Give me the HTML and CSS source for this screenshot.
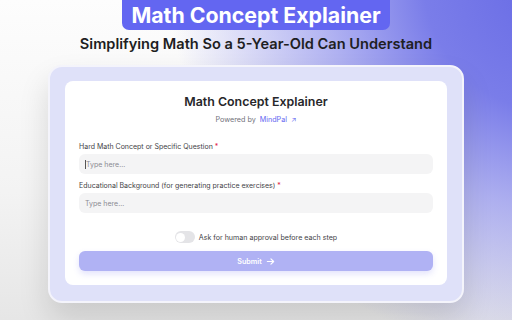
FILE: index.html
```html
<!DOCTYPE html>
<html>
<head>
<meta charset="utf-8">
<link rel="stylesheet" href="styles.css">
</head>
<body>
<div class="page">
  <div class="badge">Math Concept Explainer</div>
  <div class="subtitle">Simplifying Math So a 5-Year-Old Can Understand</div>
  <div class="frame">
    <div class="card">
      <div class="card-title">Math Concept Explainer</div>
      <div class="powered">Powered by <span class="brand">MindPal</span> <span class="brand arrow">↗</span></div>
      <div class="field field-first">
        <div class="label">Hard Math Concept or Specific Question <span class="req">*</span></div>
        <div class="input"><span class="caret"></span>Type here...</div>
      </div>
      <div class="field field-next">
        <div class="label">Educational Background (for generating practice exercises) <span class="req">*</span></div>
        <div class="input">Type here...</div>
      </div>
      <div class="toggle-row">
        <span class="toggle"><span class="knob"></span></span>
        <span class="toggle-text">Ask for human approval before each step</span>
      </div>
      <div class="submit">Submit
        <svg width="9" height="9" viewBox="0 0 10 10" fill="none" stroke="#fff" stroke-width="1.3" stroke-linecap="round" stroke-linejoin="round"><path d="M1.5 5h7M5.5 2l3 3-3 3"/></svg>
      </div>
    </div>
  </div>
</div>
</body>
</html>
```
FILE: styles.css
```css
html, body {
  margin: 0;
  padding: 0;
}
body {
  width: 512px;
  height: 320px;
  overflow: hidden;
  font-family: Inter, "Noto Sans", sans-serif;
  background:
    radial-gradient(ellipse 390px 380px at 560px -20px, #6669e5 0%, #7a7de9 35%, rgba(150,152,238,0.75) 60%, rgba(230,230,250,0) 100%),
    linear-gradient(180deg, #fdfdfd 0%, #f3f3f3 60%, #e6e6e6 100%);
}
.page {
  display: flex;
  flex-direction: column;
  align-items: center;
}
.badge {
  margin-top: -6px;
  height: 36px;
  padding: 5px 9px 0;
  box-sizing: border-box;
  display: flex;
  align-items: center;
  background: #6366f1;
  color: #fff;
  font-weight: 700;
  font-size: 21.3px;
  border-radius: 7px;
}
.subtitle {
  margin-top: 5px;
  font-size: 14.6px;
  line-height: 18px;
  font-weight: 600;
  color: #1e1e22;
}
.frame {
  margin-top: 12px;
  width: 416px;
  box-sizing: border-box;
  padding: 14px 15px 16px;
  background: #dfe1f9;
  border: 2px solid #f4f4fb;
  border-radius: 14px;
  box-shadow: 0 16px 30px rgba(0,0,0,0.13);
}
.card {
  background: #fff;
  border-radius: 8px;
  padding: 13px 14px 14px;
  display: flex;
  flex-direction: column;
}
.card-title {
  text-align: center;
  font-size: 12.4px;
  line-height: 16px;
  font-weight: 600;
  color: #27272a;
}
.powered {
  text-align: center;
  margin-top: 5px;
  font-size: 7.2px;
  line-height: 10px;
  color: #71717a;
}
.brand {
  color: #6366f1;
  margin-left: 2px;
}
.arrow {
  font-size: 7px;
}
.field {
  display: flex;
  flex-direction: column;
}
.field-first {
  margin-top: 17px;
}
.field-next {
  margin-top: 7px;
}
.label {
  font-size: 7px;
  line-height: 9px;
  color: #3f3f46;
  margin-bottom: 3px;
}
.req {
  color: #e11d48;
}
.input {
  height: 20px;
  border-radius: 6px;
  background: #f4f4f5;
  font-size: 7px;
  color: #8a8a92;
  display: flex;
  align-items: center;
  padding-left: 6px;
}
.caret {
  width: 1px;
  height: 9px;
  background: #555;
}
.toggle-row {
  margin-top: 18px;
  display: flex;
  align-items: center;
  justify-content: center;
  gap: 4px;
}
.toggle {
  width: 20px;
  height: 12px;
  border-radius: 6px;
  background: #e4e4e7;
  position: relative;
}
.knob {
  position: absolute;
  left: 1.5px;
  top: 1.5px;
  width: 9px;
  height: 9px;
  border-radius: 50%;
  background: #fff;
}
.toggle-text {
  font-size: 7.1px;
  color: #3f3f46;
}
.submit {
  margin-top: 8px;
  height: 20px;
  border-radius: 6px;
  background: #b0b2f4;
  color: #fff;
  font-size: 7.2px;
  font-weight: 600;
  display: flex;
  align-items: center;
  justify-content: center;
  gap: 4px;
  box-shadow: 0 3px 6px rgba(99,102,241,0.18);
}
```
